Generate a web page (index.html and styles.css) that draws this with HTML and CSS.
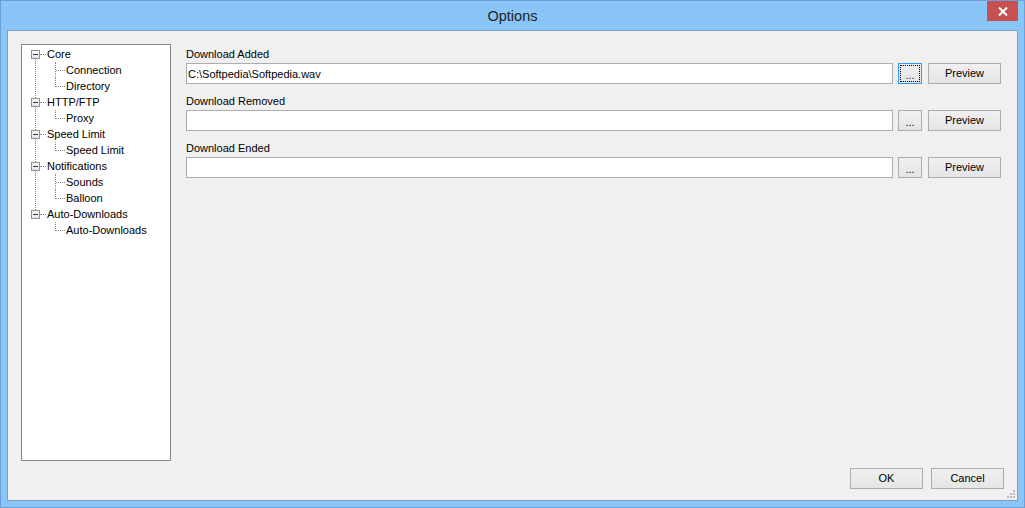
FILE: index.html
```html
<!DOCTYPE html>
<html>
<head>
<meta charset="utf-8">
<title>Options</title>
<link rel="stylesheet" href="styles.css">
</head>
<body>
<div class="window">
  <div class="titlebar">
    <span class="spacer"></span>
    <span class="title">Options</span>
    <button class="close" aria-label="Close">
      <svg width="10" height="9" viewBox="0 0 10 9"><path d="M1 0.5 L9 8.5 M9 0.5 L1 8.5" stroke="#fff" stroke-width="2"/></svg>
    </button>
  </div>
  <div class="client">
    <div class="main">
      <div class="tree">
        <ul class="roots">
          <li class="node">
            <div class="root-row"><span class="exp"></span><span class="hline"></span><span class="label">Core</span></div>
            <ul class="children">
              <li class="child">Connection</li>
              <li class="child last">Directory</li>
            </ul>
          </li>
          <li class="node">
            <div class="root-row"><span class="exp"></span><span class="hline"></span><span class="label">HTTP/FTP</span></div>
            <ul class="children">
              <li class="child last">Proxy</li>
            </ul>
          </li>
          <li class="node">
            <div class="root-row"><span class="exp"></span><span class="hline"></span><span class="label">Speed Limit</span></div>
            <ul class="children">
              <li class="child last">Speed Limit</li>
            </ul>
          </li>
          <li class="node">
            <div class="root-row"><span class="exp"></span><span class="hline"></span><span class="label">Notifications</span></div>
            <ul class="children">
              <li class="child">Sounds</li>
              <li class="child last">Balloon</li>
            </ul>
          </li>
          <li class="node last">
            <div class="root-row"><span class="exp"></span><span class="hline"></span><span class="label">Auto-Downloads</span></div>
            <ul class="children">
              <li class="child last">Auto-Downloads</li>
            </ul>
          </li>
        </ul>
      </div>
      <div class="fields">
        <div class="field">
          <div class="field-label">Download Added</div>
          <div class="field-row">
            <input class="textbox" type="text" value="C:\Softpedia\Softpedia.wav" readonly>
            <button class="btn dots focused">...</button>
            <button class="btn preview">Preview</button>
          </div>
        </div>
        <div class="field">
          <div class="field-label">Download Removed</div>
          <div class="field-row">
            <input class="textbox" type="text" value="" readonly>
            <button class="btn dots">...</button>
            <button class="btn preview">Preview</button>
          </div>
        </div>
        <div class="field">
          <div class="field-label">Download Ended</div>
          <div class="field-row">
            <input class="textbox" type="text" value="" readonly>
            <button class="btn dots">...</button>
            <button class="btn preview">Preview</button>
          </div>
        </div>
      </div>
    </div>
    <div class="actions">
      <button class="btn action">OK</button>
      <button class="btn action">Cancel</button>
    </div>
  </div>
  <svg class="grip" width="10" height="10" viewBox="0 0 10 10">
    <rect x="7" y="1" width="2" height="2" fill="#bdbdbd"/>
    <rect x="4" y="4" width="2" height="2" fill="#bdbdbd"/>
    <rect x="7" y="4" width="2" height="2" fill="#bdbdbd"/>
    <rect x="1" y="7" width="2" height="2" fill="#bdbdbd"/>
    <rect x="4" y="7" width="2" height="2" fill="#bdbdbd"/>
    <rect x="7" y="7" width="2" height="2" fill="#bdbdbd"/>
  </svg>
</div>
</body>
</html>
```

FILE: styles.css
```css
* { box-sizing: border-box; }

html, body {
  margin: 0;
  padding: 0;
  background: #8ac5f8;
}

body {
  font-family: "Liberation Sans", Arial, sans-serif;
  font-size: 11px;
  color: #000;
}

.window {
  position: relative;
  width: 1025px;
  height: 508px;
  border: 1px solid #6d9ed6;
  background: #8ac5f8;
  padding: 0 6px 6px 6px;
  display: flex;
  flex-direction: column;
}

.titlebar {
  height: 29px;
  display: grid;
  grid-template-columns: 1fr auto 1fr;
}

.title {
  font-size: 14.5px;
  line-height: 30px;
  color: #222;
  text-align: center;
}

.close {
  justify-self: end;
  align-self: start;
  width: 31px;
  height: 20px;
  margin: 0;
  padding: 0;
  border: none;
  background: #c75050;
  display: flex;
  align-items: center;
  justify-content: center;
}

.close svg { display: block; }

.client {
  flex: 1;
  border: 1px solid #7f9fc0;
  background: #f0f0f0;
  padding: 13px 13px 11px 13px;
  display: flex;
  flex-direction: column;
}

.main {
  display: flex;
  height: 417px;
}

/* tree */
.tree {
  width: 150px;
  height: 417px;
  border: 1px solid #828790;
  background: #fff;
  padding-top: 1px;
  flex: none;
}

.tree ul {
  list-style: none;
  margin: 0;
  padding: 0;
}

.node {
  position: relative;
}

.node::before {
  content: "";
  position: absolute;
  left: 13px;
  top: 8px;
  bottom: -8px;
  border-left: 1px dotted #8a8a8a;
}

.node.last::before { display: none; }

.root-row {
  display: flex;
  height: 16px;
  line-height: 16px;
  padding-left: 9px;
  white-space: nowrap;
}

.exp {
  position: relative;
  z-index: 1;
  width: 9px;
  height: 9px;
  margin-top: 4px;
  border: 1px solid #919191;
  background: linear-gradient(#ffffff, #e4e4e4);
  flex: none;
}

.exp::after {
  content: "";
  position: absolute;
  left: 1px;
  top: 3px;
  width: 5px;
  height: 1px;
  background: #1f3a7a;
}

.hline {
  width: 6px;
  height: 0;
  margin-top: 8px;
  border-top: 1px dotted #8a8a8a;
  flex: none;
}

.label {
  margin-left: 1px;
}

.child {
  position: relative;
  height: 16px;
  line-height: 16px;
  padding-left: 44px;
  white-space: nowrap;
}

.child::before {
  content: "";
  position: absolute;
  left: 33px;
  top: 0;
  height: 16px;
  border-left: 1px dotted #8a8a8a;
}

.child.last::before { height: 9px; }

.child::after {
  content: "";
  position: absolute;
  left: 34px;
  top: 8px;
  width: 9px;
  border-top: 1px dotted #8a8a8a;
}

/* fields */
.fields {
  flex: 1;
  margin-left: 15px;
  padding-top: 2px;
  padding-right: 3px;
  display: flex;
  flex-direction: column;
}

.field {
  margin-bottom: 9px;
}

.field-label {
  height: 16px;
  line-height: 16px;
  margin-bottom: 1px;
}

.field-row {
  display: flex;
  height: 21px;
}

.textbox {
  flex: 1;
  min-width: 0;
  height: 21px;
  margin: 0 5px 0 0;
  padding: 0 1px;
  border: 1px solid #abadb3;
  background: #fff;
  font-family: "Liberation Sans", Arial, sans-serif;
  font-size: 11px;
  color: #000;
  outline: none;
}

.btn {
  height: 21px;
  margin: 0;
  padding: 0;
  border: 1px solid #acacac;
  background: linear-gradient(#f0f0f0, #e5e5e5);
  font-family: "Liberation Sans", Arial, sans-serif;
  font-size: 11px;
  color: #000;
  line-height: 19px;
  text-align: center;
}

.dots {
  width: 24px;
  margin-right: 6px;
  padding-top: 2px;
}

.dots.focused {
  border-color: #3399ff;
  outline: 1px dotted #000;
  outline-offset: -3px;
  color: #5a0a5a;
}

.preview {
  width: 73px;
}

.actions {
  margin-top: 7px;
  display: flex;
  justify-content: flex-end;
  gap: 8px;
}

.action {
  width: 73px;
}

.grip {
  position: absolute;
  right: 8px;
  bottom: 8px;
  display: block;
}
```
